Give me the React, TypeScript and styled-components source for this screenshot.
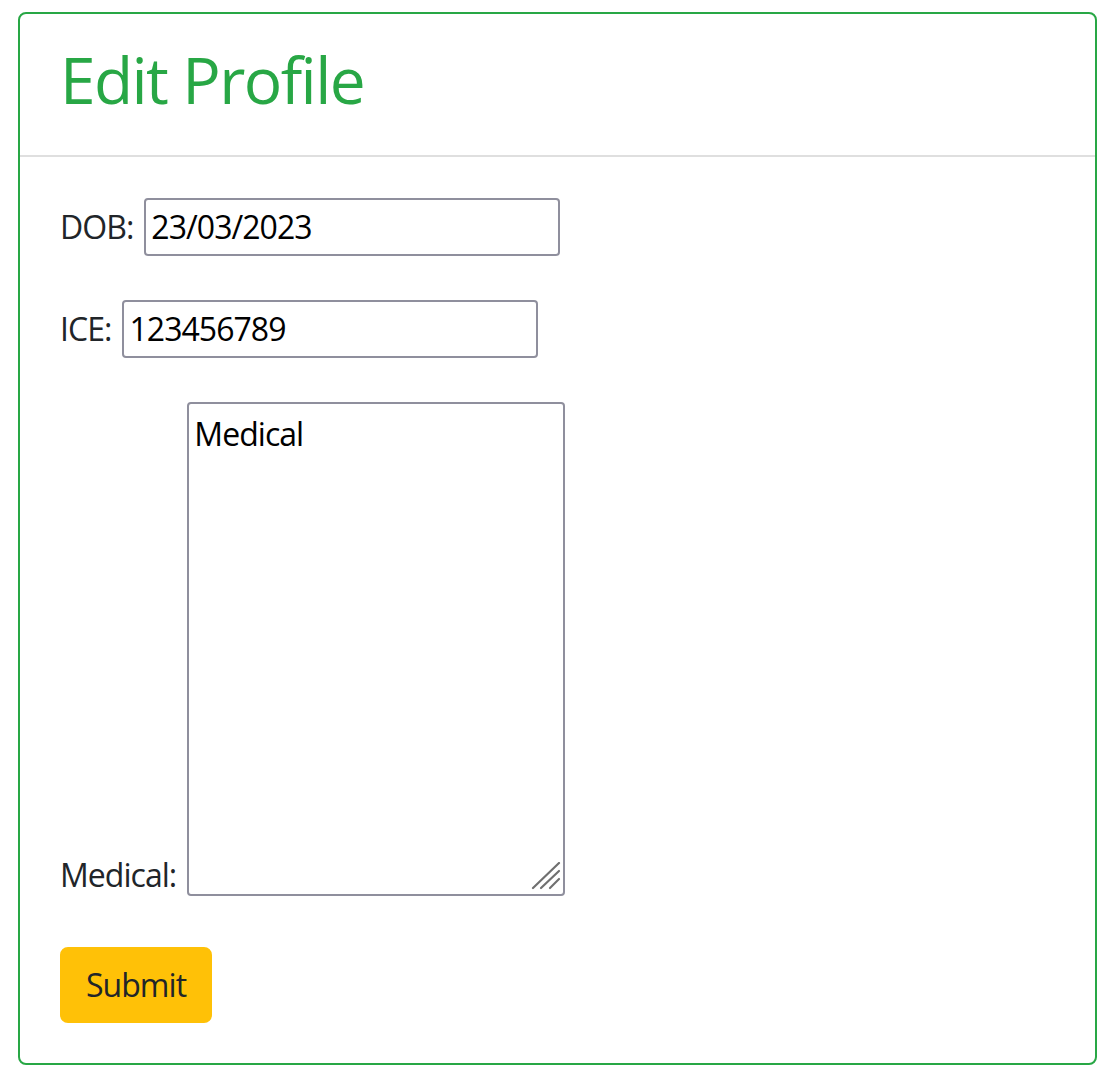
import * as React from "react";
import styled, { createGlobalStyle } from "styled-components";

const GlobalStyle = createGlobalStyle`
  html, body {
    margin: 0;
    padding: 0;
    background: #fff;
  }
  body {
    font-family: "Open Sans", "Noto Sans", sans-serif;
    font-size: 32px;
    line-height: 1.5;
    letter-spacing: -0.03em;
    color: #212529;
  }
  * {
    box-sizing: border-box;
  }
`;

const Page = styled.div`
  padding: 12px 8px 0 18px;
`;

const Card = styled.div`
  border: 2px solid #28a745;
  border-radius: 8px;
  background: #fff;
`;

const CardHeader = styled.div`
  padding: 24px 40px;
  border-bottom: 2px solid #dfdfdf;
`;

const Title = styled.h2`
  margin: 0 0 16px;
  padding-top: 4px;
  height: 76.8px;
  font-size: 64px;
  font-weight: 400;
  line-height: 1.2;
  letter-spacing: -0.025em;
  color: #28a745;
`;

const CardBody = styled.div`
  padding: 41px 40px 40px;
`;

const Group = styled.div<{ $area?: boolean }>`
  display: flex;
  align-items: ${p => (p.$area ? "flex-end" : "baseline")};
  gap: 11px;
  margin-bottom: ${p => (p.$area ? "51px" : "44px")};
`;

const Label = styled.label<{ $area?: boolean }>`
  line-height: 48px;
  white-space: nowrap;
  margin-bottom: ${p => (p.$area ? "-3px" : "0")};
`;

const Input = styled.input`
  width: 416px;
  height: 58px;
  margin: 0;
  padding: 2px 5px;
  border: 2px solid #8f8f9d;
  border-radius: 4px;
  font: inherit;
  letter-spacing: inherit;
  color: #000;
  background: #fff;
  outline: none;
`;

const AreaWrap = styled.div`
  position: relative;
  width: 378px;
  height: 494px;
`;

const TextArea = styled.textarea`
  display: block;
  width: 100%;
  height: 100%;
  margin: 0;
  padding: 6px 5px;
  border: 2px solid #8f8f9d;
  border-radius: 4px;
  font: inherit;
  letter-spacing: inherit;
  line-height: 48px;
  color: #000;
  background: #fff;
  resize: none;
  outline: none;
`;

const Grip = styled.svg`
  position: absolute;
  right: 4px;
  bottom: 6px;
  pointer-events: none;
`;

const SubmitButton = styled.button`
  display: inline-block;
  padding: 12px 24px;
  border: 2px solid #ffc107;
  border-radius: 8px;
  background: #ffc107;
  color: #212529;
  font: inherit;
  letter-spacing: inherit;
  line-height: 1.5;
  cursor: pointer;
`;

export default function App() {
  const [dob, setDob] = React.useState("23/03/2023");
  const [ice, setIce] = React.useState("123456789");
  const [medical, setMedical] = React.useState("Medical");

  return (
    <Page>
      <GlobalStyle />
      <Card>
        <CardHeader>
          <Title>Edit Profile</Title>
        </CardHeader>
        <CardBody>
          <form onSubmit={e => e.preventDefault()}>
            <Group>
              <Label htmlFor="dob">DOB:</Label>
              <Input id="dob" value={dob} onChange={e => setDob(e.target.value)} />
            </Group>
            <Group>
              <Label htmlFor="ice">ICE:</Label>
              <Input id="ice" value={ice} onChange={e => setIce(e.target.value)} />
            </Group>
            <Group $area>
              <Label htmlFor="medical" $area>
                Medical:
              </Label>
              <AreaWrap>
                <TextArea
                  id="medical"
                  value={medical}
                  onChange={e => setMedical(e.target.value)}
                />
                <Grip width="30" height="28" viewBox="0 0 30 28">
                  <g stroke="#707070" strokeWidth="2.2" strokeLinecap="round">
                    <line x1="2" y1="26" x2="28" y2="1" />
                    <line x1="10" y1="26" x2="28" y2="9" />
                    <line x1="19" y1="26" x2="28" y2="17" />
                  </g>
                </Grip>
              </AreaWrap>
            </Group>
            <SubmitButton type="submit">Submit</SubmitButton>
          </form>
        </CardBody>
      </Card>
    </Page>
  );
}
